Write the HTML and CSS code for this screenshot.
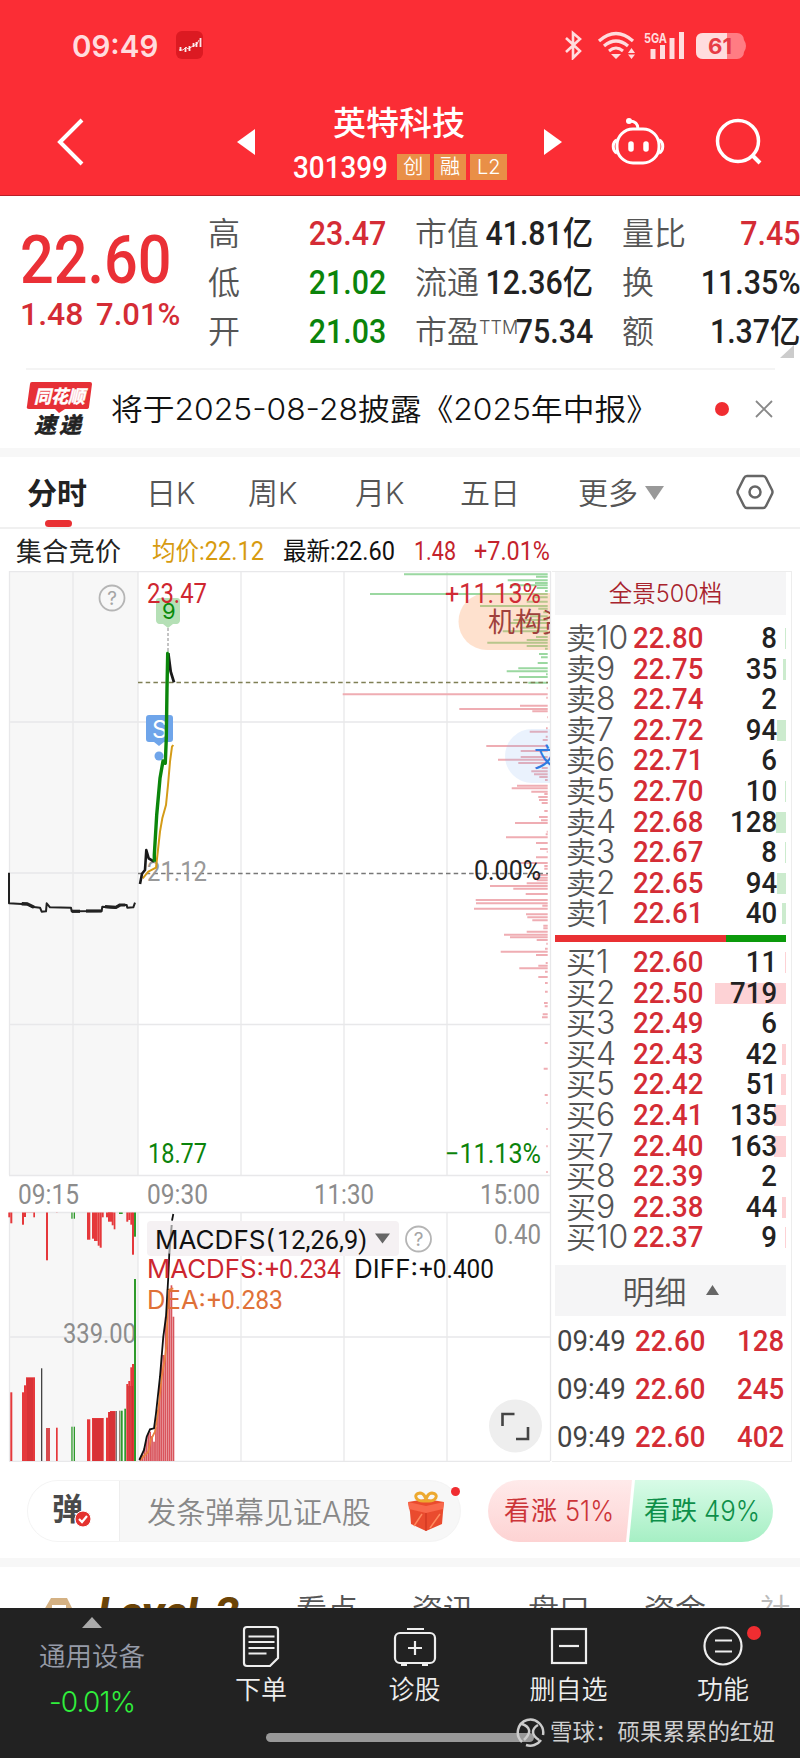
FILE: index.html
```html
<!DOCTYPE html>
<html lang="zh-CN">
<head>
<meta charset="utf-8">
<title>英特科技 301399</title>
<link rel="stylesheet" href="styles.css">
</head>
<body>
<div class="app">
  <header class="header">
    <div class="status">
      <span class="clock">09:49</span>
      <svg class="app-ico" width="27" height="28" viewBox="0 0 27 28"><rect width="27" height="28" rx="6" fill="#dc1a22"/><path d="M4.500 16v4M9.500 17v4M13.500 15v5M17.500 12v4M20.500 11v5M24.500 7v9" stroke="#fff" stroke-width="1.800" opacity=".9"/><path d="M3 19h4l3-3 2 2 5-3 4-2 2-4" fill="none" stroke="#fff" stroke-width=".8"/></svg>
      <svg class="sys" width="186" height="30" viewBox="560 30 186 30" fill="none" stroke="#ffdcde">
        <path d="M565 38l14 13-7 7V33l7 6-14 13" stroke-width="2.6"/>
        <path d="M598 41Q615 26 632 41" stroke-width="3.2"/><path d="M603 46Q615 36 627 46" stroke-width="3.2"/><path d="M608 51Q615 45 622 51" stroke-width="3"/>
        <path d="M610 54h10l-5 5zM627 53h7l-3.500-5zM627 54.500h7l-3.500 4.500z" fill="#ffdcde" stroke="none"/>
        <path d="M652 49v10M661.500 45v14M671 38v21M680.500 32v27" stroke-width="5"/>
        <text class="ui b" x="643" y="42.500" font-size="13" textLength="23" lengthAdjust="spacingAndGlyphs" fill="#ffdcde" stroke="none">5GA</text>
        <rect x="695" y="33" width="48" height="26" rx="7" fill="#ff7c83" stroke="none"/><path d="M743 40q4 6 0 12z" fill="#ff7c83" stroke="none"/>
        <path d="M702 33h24v26h-24q-7 0-7-7V40q0-7 7-7z" fill="#ffdcde" stroke="none"/>
        <text class="ui b" x="707" y="54" font-size="22" textLength="24" lengthAdjust="spacingAndGlyphs" fill="#e73b46" stroke="none">61</text>
      </svg>
    </div>
    <div class="titlebar">
      <svg class="back" width="30" height="50" viewBox="0 0 30 50"><path d="M26 3L4 25l22 22" fill="none" stroke="#fff" stroke-width="4"/></svg>
      <svg class="prev" width="18" height="26" viewBox="0 0 18 26"><path d="M18 0v26L0 13z" fill="#fff"/></svg>
      <div class="stock">
        <h1>英特科技</h1>
        <div class="code"><span class="codebox"><b class="num">301399</b></span><i>创</i><i>融</i><i class="l2">L2</i></div>
      </div>
      <svg class="next" width="18" height="26" viewBox="0 0 18 26"><path d="M0 0v26l18-13z" fill="#fff"/></svg>
      <svg class="robot" width="54" height="50" viewBox="0 0 54 50" fill="none" stroke="#fff" stroke-width="3"><rect x="6" y="12" width="42" height="34" rx="16"/><path d="M27 12c0-5-3-8-8-8"/><circle cx="18" cy="4" r="3" fill="#fff" stroke="none"/><path d="M6 23c-5 2-5 11 0 13M48 23c5 2 5 11 0 13"/><path d="M20 27v5M35 27v5" stroke-width="5.500" stroke-linecap="round"/></svg>
      <svg class="search" width="48" height="48" viewBox="0 0 48 48" fill="none" stroke="#fff" stroke-width="3.500"><circle cx="23" cy="23" r="20.500"/><path d="M37 37l8 8" stroke-width="4"/></svg>
    </div>
  </header>

  <section class="quote">
    <div class="last red">
      <div class="price"><span class="num">22.60</span></div>
      <div class="chg"><span class="num">1.48</span><span class="num">7.01%</span></div>
    </div>
    <dl class="stats c1">
      <dt>高</dt><dd class="red"><span class="num">23.47</span></dd>
      <dt>低</dt><dd class="green"><span class="num">21.02</span></dd>
      <dt>开</dt><dd class="green"><span class="num">21.03</span></dd>
    </dl>
    <dl class="stats c2">
      <dt>市值</dt><dd><span class="num">41.81亿</span></dd>
      <dt>流通</dt><dd><span class="num">12.36亿</span></dd>
      <dt>市盈<sup>TTM</sup></dt><dd><span class="num">75.34</span></dd>
    </dl>
    <dl class="stats c3">
      <dt>量比</dt><dd class="red"><span class="num">7.45</span></dd>
      <dt>换</dt><dd><span class="num">11.35%</span></dd>
      <dt>额</dt><dd><span class="num">1.37亿</span></dd>
    </dl>
    <svg class="corner" width="14" height="13"><path d="M14 0v13H0z" fill="#ccc"/></svg>
  </section>

  <section class="notice">
    <svg width="66" height="56" viewBox="27 380 66 56"><path d="M33 381h58q2 0 2 2l-3 23q0 2-3 2H66l-6 4-4-4H30q-3 0-2-3l3-22q0-2 2-2z" fill="#e62f36"/>
      <g class="cjk b" font-style="italic"><text x="35" y="402" font-size="18" textLength="51" lengthAdjust="spacingAndGlyphs" fill="#fff" stroke="#fff" stroke-width=".5">同花顺</text><text x="35" y="432" font-size="22" textLength="21" fill="#222" stroke="#222" stroke-width=".6">速</text><text x="60" y="432" font-size="22" textLength="21" fill="#222" stroke="#222" stroke-width=".6">递</text></g></svg>
    <p><span>将于2025-08-28披露《2025年中报》</span></p>
    <i class="dot"></i>
    <svg class="close" width="18" height="18"><path d="M1 1l16 16M17 1L1 17" stroke="#888" stroke-width="1.800"/></svg>
  </section>

  <nav class="tabs">
    <a class="on">分时</a><a>日K</a><a>周K</a><a>月K</a><a>五日</a><a class="more">更多<svg width="19" height="14"><path d="M0 0h19l-9.500 14z" fill="#999"/></svg></a>
    <svg class="gear" width="38" height="36" viewBox="0 0 38 36" fill="none" stroke="#666" stroke-width="2.500"><path d="M11 2h16q2 0 3 2l6 12q1 2 0 4l-6 12q-1 2-3 2H11q-2 0-3-2L2 20q-1-2 0-4L8 4q1-2 3-2z"/><circle cx="19" cy="18" r="5.500"/></svg>
  </nav>

  <svg class="info" width="800" height="42" viewBox="0 529 800 42">
    <text class="cjk" x="16" y="561" font-size="26" textLength="105" fill="#222">集合竞价</text>
    <text class="din" x="152" y="560" font-size="25" textLength="112" lengthAdjust="spacingAndGlyphs" fill="#d79b10">均价:22.12</text>
    <text class="din" x="283" y="560" font-size="25" textLength="112" lengthAdjust="spacingAndGlyphs" fill="#111">最新:22.60</text>
    <text class="din" x="414" y="560" font-size="25" textLength="42" lengthAdjust="spacingAndGlyphs" fill="#c4232c">1.48</text>
    <text class="din" x="474" y="560" font-size="25" textLength="76" lengthAdjust="spacingAndGlyphs" fill="#c4232c">+7.01%</text>
  </svg>

  <main class="board">
    <svg class="chart" width="552" height="891" viewBox="0 571 552 891">
      <rect x="9" y="571" width="129" height="604" fill="#f7f7f7"/><rect x="9" y="1212" width="129" height="250" fill="#f7f7f7"/>
      <path d="M9 571.500H550M9 722H550M9 873H138M9 1024.500H550M9 1175.500H550M9 1212.500H550M9 1337H550M9 1461.500H550M9.500 571V1175M73 571V1175M138 571V1175M241 571V1175M344 571V1175M447 571V1175M550.500 571V1461M9.500 1212V1461M73 1212V1461M138 1212V1461M241 1212V1461M344 1212V1461M447 1212V1461" stroke="#e8e8ea" stroke-width="1.300" fill="none"/>
      <g id="depth"></g>
      <path d="M550 593H487a28.500 28.500 0 0 0 0 57h63z" fill="#fb9d5c" fill-opacity=".3"/>
      <path d="M550 729H532a27 27 0 0 0 0 54h18z" fill="#8cb8f5" fill-opacity=".18"/>
      <svg x="480" y="600" width="70" height="180" viewBox="480 600 70 180"><text class="cjk" x="488" y="632" font-size="27" fill="#a0413c">机构资</text><text class="cjk" x="534" y="767" font-size="26" fill="#2f7be0">文</text></svg>
      <path d="M138 682.500H548" stroke="#7f7f55" stroke-width="1.300" stroke-dasharray="4.500 3.200"/>
      <path d="M138 873.500H548" stroke="#777" stroke-width="1.300" stroke-dasharray="4.500 3.200"/>
      <path d="M168 628V652" stroke="#888" stroke-dasharray="3 2"/>
      <path d="M159 598h18q3 0 3 3v19q0 3-3 4h-4l-5 4-5-4h-4q-3-1-3-4v-19q0-3 3-3z" fill="#b5e0b6"/>
      <text class="ui" x="162" y="619" font-size="22" fill="#0a8a0a">9</text>
      <path d="M149 715h21q3 0 3 3v21q0 3-3 3h-6l-5 4-5-4h-5q-3 0-3-3v-21q0-3 3-3z" fill="#6fa5ea"/><circle cx="159" cy="756" r="4.500" fill="#6fa5ea"/>
      <text class="ui" x="152" y="738" font-size="24" fill="#fff">S</text>
      <text class="din" x="147" y="881" font-size="27" textLength="60" lengthAdjust="spacingAndGlyphs" fill="#999">21.12</text>
      <g id="lines" fill="none" stroke-linejoin="round"></g>
      <text class="din" x="147" y="603" font-size="27" textLength="60" lengthAdjust="spacingAndGlyphs" fill="#cf2630">23.47</text>
      <text class="din" x="445" y="603" font-size="27" textLength="96" lengthAdjust="spacingAndGlyphs" fill="#d02b35">+11.13%</text>
      <text class="din" x="474" y="880" font-size="27" textLength="67" lengthAdjust="spacingAndGlyphs" fill="#222">0.00%</text>
      <text class="din" x="148" y="1163" font-size="27" textLength="59" lengthAdjust="spacingAndGlyphs" fill="#0b830b">18.77</text>
      <text class="din" x="445" y="1163" font-size="27" textLength="96" lengthAdjust="spacingAndGlyphs" fill="#0b830b">−11.13%</text>
      <g class="din" font-size="27" fill="#8c8c8c">
        <text x="18" y="1204" textLength="61" lengthAdjust="spacingAndGlyphs">09:15</text><text x="147" y="1204" textLength="61" lengthAdjust="spacingAndGlyphs">09:30</text>
        <text x="314" y="1204" textLength="60" lengthAdjust="spacingAndGlyphs">11:30</text><text x="480" y="1204" textLength="60" lengthAdjust="spacingAndGlyphs">15:00</text>
        <text x="494" y="1244" textLength="47" lengthAdjust="spacingAndGlyphs">0.40</text><text x="63" y="1343" textLength="73" lengthAdjust="spacingAndGlyphs">339.00</text>
      </g>
      <g fill="none" stroke="#b5b5b5" stroke-width="1.800"><circle cx="112" cy="598" r="12.500"/><circle cx="418.500" cy="1239" r="12.500"/></g>
      <g class="ui" font-size="19" fill="#a5a5a5" text-anchor="middle"><text x="112" y="605">?</text><text x="418.500" y="1246">?</text></g>
      <g id="auction"></g>
      <rect x="147" y="1221" width="252" height="35" rx="4" fill="#f5f1f3"/>
      <g id="macd" fill="none"></g>
      <text class="ui" x="155" y="1249" font-size="26" textLength="120" lengthAdjust="spacingAndGlyphs" fill="#111">MACDFS(</text>
      <text class="din" x="277" y="1249" font-size="26" textLength="90" lengthAdjust="spacingAndGlyphs" fill="#111">12,26,9)</text>
      <path d="M375 1233.500h15l-7.500 10z" fill="#666"/>
      <text class="ui" x="147" y="1278" font-size="25" textLength="117" lengthAdjust="spacingAndGlyphs" fill="#cc2630">MACDFS:</text><text class="din" x="265" y="1278" font-size="26" textLength="76" lengthAdjust="spacingAndGlyphs" fill="#cc2630">+0.234</text>
      <text class="ui" x="354" y="1278" font-size="25" textLength="64" lengthAdjust="spacingAndGlyphs" fill="#111">DIFF:</text><text class="din" x="419" y="1278" font-size="26" textLength="75" lengthAdjust="spacingAndGlyphs" fill="#111">+0.400</text>
      <text class="ui" x="147" y="1309" font-size="25" textLength="59" lengthAdjust="spacingAndGlyphs" fill="#df7138">DEA:</text><text class="din" x="207" y="1309" font-size="26" textLength="76" lengthAdjust="spacingAndGlyphs" fill="#df7138">+0.283</text>
      <circle cx="515.500" cy="1426" r="26.500" fill="#eee"/>
      <path d="M502.500 1426v-12h12M528 1427v12h-12" fill="none" stroke="#444" stroke-width="2.600"/>
    </svg>
    <aside class="book">
      <div class="book-head"><span>全景500档</span></div>
      <div class="rows" id="asks"></div>
      <div class="ratio"><i></i></div>
      <div class="rows bids" id="bids"></div>
      <div class="detail-head">明细<svg width="13" height="10"><path d="M6.500 0L13 10H0z" fill="#666"/></svg></div>
      <div class="ticks" id="ticks"></div>
    </aside>
  </main>

  <section class="danmu">
    <div class="input"><div class="dm"><b>弹</b><svg width="18" height="18" viewBox="0 0 18 18"><circle cx="9" cy="9" r="8" fill="#e4322f" stroke="#fff"/><path d="M5 9l3 3 5-6" fill="none" stroke="#fff" stroke-width="2.200"/></svg></div><span class="ph">发条弹幕见证A股</span>
      <svg class="gift" width="38" height="40" viewBox="407 1497 38 40"><path d="M408 1508l18-3 18 3-1 10-1 12-16 7-15-7-1-12z" fill="#ea4b2e"/><path d="M408 1508l18 4 18-4-1 7-17 4-17-4z" fill="#f9694c"/><path d="M426 1519v18" stroke="#c9301c" stroke-width="1"/><path d="M414 1532l8-12M430 1534l10-14" stroke="#ff8a5e" stroke-width="1.500"/><path d="M425 1507c-9 1-13-7-5-8 4 0 6 5 6 8 0-3 2-8 6-8 8 1 4 9-5 8z" fill="none" stroke="#eda92f" stroke-width="3"/></svg><i class="dot small"></i></div>
    <svg class="vote" width="286" height="62" viewBox="488 1480 286 62">
      <defs><linearGradient id="up" x2="0" y2="1"><stop stop-color="#ffeaea"/><stop offset="1" stop-color="#fdd3d3"/></linearGradient><linearGradient id="dn" x2="0" y2="1"><stop stop-color="#d8fbe7"/><stop offset="1" stop-color="#a6efc4"/></linearGradient></defs>
      <path d="M519 1480h113l-6 62H519a31 31 0 0 1 0-62z" fill="url(#up)"/><path d="M635 1480h107a31 31 0 0 1 0 62H629z" fill="url(#dn)"/>
      <g class="cjk" font-size="26"><text x="504" y="1520" textLength="53" fill="#cc3438">看涨</text><text x="644" y="1520" textLength="53" fill="#0d8f49">看跌</text></g>
      <g class="ui lt" font-size="28"><text x="565" y="1521" textLength="49" lengthAdjust="spacingAndGlyphs" fill="#cc3438">51%</text><text x="704" y="1521" textLength="56" lengthAdjust="spacingAndGlyphs" fill="#0d8f49">49%</text></g>
    </svg>
  </section>

  <nav class="subtabs">
    <svg class="badge" width="30" height="30"><path d="M7 0h16l6 12v18H0V12z" fill="#d4b183"/><path d="M8 7h14v5H8z" fill="#fff"/></svg>
    <em>Level-2</em><a>看点</a><a>资讯</a><a>盘口</a><a>资金</a><a class="fade">社</a>
  </nav>

  <footer class="nav">
    <div class="idx"><svg width="20" height="11"><path d="M10 0l10 11H0z" fill="#aaa"/></svg><span>通用设备</span><b>-0.01%</b></div>
    <div class="it"><svg width="44" height="44" viewBox="0 0 44 44"><path d="M8 3h28q3 0 3 3v28l-8 8H8q-3 0-3-3V6q0-3 3-3z"/><path d="M9.500 12.500h26M9.500 18h26M9.500 24h26M9.500 29.500h18"/></svg><span>下单</span></div>
    <div class="it"><svg width="44" height="44" viewBox="0 0 44 44"><rect x="2" y="9" width="40" height="30" rx="5"/><path d="M14 5h17M22 17v14M15 24h14M8 41h6M29 41h6"/></svg><span>诊股</span></div>
    <div class="it"><svg width="44" height="44" viewBox="0 0 44 44"><rect x="5" y="5" width="34" height="34"/><path d="M12 22h20"/></svg><span>删自选</span></div>
    <div class="it fn"><svg width="44" height="44" viewBox="0 0 44 44"><circle cx="22" cy="22" r="18.500"/><path d="M14 16.500h17M14 27.500h17"/></svg><span>功能</span><i class="dot"></i></div>
    <div class="home"></div>
    <div class="mark"><svg width="29" height="29" viewBox="0 0 29 29" fill="none" stroke="#ccc" stroke-width="2.500"><path d="M11 2A13 13 0 0 0 6 24M10 27A13 13 0 0 0 25 22M27 17A13 13 0 0 0 11 2M6 6q6 2 7 6t-5 10M22 7q-5 3-5 7t6 8"/></svg><span>雪球：硕果累累的红妞</span></div>
  </footer>
</div>
<script src="app.js"></script>
</body>
</html>
```
FILE: styles.css
```css
* { box-sizing: border-box; }
body { margin: 0; background: #fff; font-family: Inter, "Noto Sans CJK SC", sans-serif; color: #222; }
h1, p, dl, dd { margin: 0; }
i { font-style: normal; }
svg { display: block; flex: none; }
.app { width: 800px; height: 1758px; overflow: hidden; display: flex; flex-direction: column; }
.app > * { flex: none; }
.num, .din { font-family: Roboto, "Noto Sans CJK SC", sans-serif; font-weight: 500; }
.din { font-weight: 400; }
.num { display: inline-block; white-space: nowrap; transform: scaleX(.92); transform-origin: right center; }
.cjk { font-family: "Noto Sans CJK SC", sans-serif; }
.ui { font-family: Inter, sans-serif; }
.lt { font-weight: 300; }
.b { font-weight: 700; }
.red { color: #d42c35; }
.green { color: #0b840b; }
.dot { display: block; width: 14px; height: 14px; border-radius: 50%; background: #f02d31; }

.header { height: 196px; background: #fb2d35; border-bottom: 1px solid #b91f28; color: #fff; }
.status { height: 92px; padding: 30px 53px 0 72px; display: flex; align-items: flex-start; }
.clock { font-weight: 600; font-size: 29.5px; line-height: 32px; color: #ffdcde; width: 104px; }
.app-ico { margin-top: 1px; }
.sys { margin-left: auto; }
.titlebar { display: flex; align-items: center; height: 100px; padding: 0 37px 0 56px; }
.back { margin-right: 151px; }
.stock { width: 216px; margin-left: 36px; margin-right: 37px; }
h1 { font: 500 33px/40px "Noto Sans CJK SC", sans-serif; text-align: center; margin-top: 1px; }
.code { display: flex; align-items: center; gap: 4px; height: 34px; margin-top: 9px; }
.codebox { width: 102px; padding-left: 2px; }
.codebox .num { font-size: 32px; transform: scaleX(.87); transform-origin: left; }
.code i { width: 33px; height: 26px; background: #e98f47; font: 350 20px/26px Inter, "Noto Sans CJK SC", sans-serif; text-align: center; }
.code i.l2 { width: 37px; }
.next { margin-right: 49px; }
.robot { margin-right: 50px; }

.quote { height: 172px; position: relative; display: flex; padding: 13px 0 0 20px; }
.last { width: 188px; }
.price { font-size: 66px; line-height: 66px; margin-top: 17px; }
.last .num { transform-origin: left; }
.price .num { transform: scaleX(.9); color: #ea3036; }
.chg { display: flex; font-size: 32px; line-height: 34px; margin-top: 3px; font-weight: 400; }
.chg .num { transform: scaleX(.97); }
.chg .num:first-child { width: 76px; transform: scaleX(1); }
.stats { display: grid; grid-template-columns: auto 1fr; grid-auto-rows: 49px; font-size: 32px; line-height: 49px; }
.stats dt { color: #555; font-weight: 350; font-size: 32px; white-space: nowrap; }
.stats dd { display: flex; justify-content: flex-end; font-size: 33px; min-width: 0; }
.stats dt sup { font: 300 18px/1 Inter, sans-serif; vertical-align: 9px; margin-right: -20px; }
.c1 { width: 178px; }
.c2 { width: 178px; margin-left: 29px; }
.c3 { width: 178px; margin-left: 29px; }
.corner { position: absolute; right: 6px; bottom: 10px; }

.notice { height: 80px; margin-left: 26px; width: 749px; border-top: 2px solid #f4f4f4; display: flex; align-items: center; padding-right: 2px; }
.notice p { margin: -4px 0 0 19px; width: 605px; font-size: 30px; font-weight: 350; white-space: nowrap; color: #111; }
.notice p span { display: inline-block; transform: scaleX(1.06); transform-origin: left; }
.notice .close { margin-left: 26px; }

.tabs { height: 81px; border-top: 9px solid #f7f7f7; border-bottom: 2px solid #f0f0f0; display: grid; grid-template-columns: 119px 102px 107px 105px 118px 158px auto; padding-left: 27px; align-items: center; font-size: 30px; line-height: 70px; color: #555; font-weight: 350; }
.tabs a { padding-top: 2px; line-height: 68px; }
.tabs a.on { color: #222; font-weight: 700; position: relative; }
.tabs a.on::after { content: ""; position: absolute; left: 18px; bottom: 0; width: 27px; height: 7px; border-radius: 4px; background: #e93033; }
.tabs .more { display: flex; align-items: center; gap: 7px; }

.board { display: flex; height: 891px; }
.book { width: 240px; border: 1px solid #ededed; border-left: 0; padding: 0 5px 0 3px; }
.book-head { height: 43px; background: #f5f5f6; color: #a8232d; font-size: 23.500px; line-height: 43px; text-align: center; padding-right: 10px; margin-bottom: 8px; font-weight: 350; }
.row { height: 30.6px; line-height: 30.6px; position: relative; display: flex; padding-left: 11px; align-items: center; }
.row .lab { width: 67px; font-size: 30px; color: #555; white-space: nowrap; font-weight: 350; }
.row .lab u { font-size: 32px; text-decoration: none; }
.row .num { position: relative; font-size: 30px; }
.row .p { transform-origin: left; width: 78px; }
.row .q { margin-left: auto; margin-right: 9px; color: #222; }
.row .bar { position: absolute; right: 0; top: 5px; height: 21px; background: #ccebce; }
.bids .bar { background: #fdd2d5; }
.ratio { height: 7px; margin: 6px 0 5px; background: #0c9a0c; }
.ratio i { display: block; width: 171px; height: 7px; background: #e93033; }
.detail-head { height: 51px; margin: 12px 0 1px; background: #f5f5f6; display: flex; justify-content: center; align-items: center; gap: 19px; color: #555; font-size: 32px; font-weight: 350; }
.tick { height: 47.8px; display: flex; align-items: center; font-size: 30px; padding: 0 2px; }
.tick span:first-child { color: #444; width: 78px; transform-origin: left; font-weight: 400; }
.tick span:nth-child(2) { transform-origin: left; }
.tick span:last-child { margin-left: auto; }

.danmu { height: 96px; padding: 18px 26px 0 27px; display: flex; justify-content: space-between; }
.input { width: 434px; height: 62px; border-radius: 31px; background: #f7f7f7; position: relative; display: flex; align-items: center; border: 1px solid #f4f4f4; }
.dm { width: 92px; height: 60px; background: #fff; border-radius: 30px 0 0 30px; border-right: 1px solid #eee; position: relative; }
.dm b { position: absolute; left: 24px; top: 4px; font: 700 31px/44px "Noto Sans CJK SC", sans-serif; color: #4a4a4a; }
.dm svg { position: absolute; left: 46px; top: 29px; }
.ph { width: 229px; margin: -2px 0 0 27px; font-size: 29.2px; font-weight: 350; color: #888; white-space: nowrap; }
.gift { margin-left: 31px; }
.dot.small { position: absolute; right: 0; top: 6px; width: 9px; height: 9px; }

.subtabs { height: 50px; border-top: 9px solid #f7f7f7; position: relative; overflow: hidden; display: flex; align-items: flex-start; padding: 20px 0 0 44px; font-size: 31px; font-weight: 350; color: #555; }
.badge { margin-top: 11px; }
.subtabs em { flex: none; width: 198px; margin-left: 24px; font: italic 800 38px/44px Inter, sans-serif; color: #6b4407; margin-top: 2px; }
.subtabs a { flex: none; width: 116px; line-height: 46px; }
.subtabs .fade { color: #bbb; }

.nav { height: 150px; background: #222; position: relative; display: grid; grid-template-columns: 184px 154px 153px 155px 154px; }
.idx { display: flex; flex-direction: column; align-items: center; padding-top: 9px; color: #969ba8; font-size: 26.500px; font-weight: 350; }
.idx span { line-height: 38px; margin-top: 9px; }
.idx b { font-weight: 350; font-size: 28px; color: #30ee3c; line-height: 40px; margin-top: 7px; letter-spacing: -.8px; }
.it { display: flex; flex-direction: column; align-items: center; padding-top: 16px; color: #eee; font-size: 26px; font-weight: 350; }
.it svg { fill: none; stroke: #eee; stroke-width: 2.200; }
.it span { line-height: 38px; margin-top: 3px; }
.fn { position: relative; }
.fn .dot { position: absolute; left: 101px; top: 18px; }
.home { position: absolute; left: 266px; top: 125px; width: 268px; height: 9px; border-radius: 5px; background: #999; }
.mark { position: absolute; left: 516px; top: 109px; display: flex; align-items: center; gap: 5px; font-size: 22.500px; line-height: 30px; color: #d0d0d0; white-space: nowrap; }
```
FILE: app.js
```js
const $ = id => document.getElementById(id);

// Order book: level, price, quantity, bar width
const asks = [[10,'22.80',8,1],[9,'22.75',35,3],[8,'22.74',2,0],[7,'22.72',94,9],[6,'22.71',6,0],[5,'22.70',10,1],[4,'22.68',128,10],[3,'22.67',8,1],[2,'22.65',94,9],[1,'22.61',40,4]];
const bids = [[1,'22.60',11,1],[2,'22.50',719,71],[3,'22.49',6,0],[4,'22.43',42,4],[5,'22.42',51,5],[6,'22.41',135,12],[7,'22.40',163,12],[8,'22.39',2,0],[9,'22.38',44,4],[10,'22.37',9,1]];
const row = side => ([n, p, q, w]) => `<div class="row"><i class="bar" style="width:${w}px"></i><span class="lab">${side}<u>${n}</u></span><span class="num p red">${p}</span><span class="num q">${q}</span></div>`;
$('asks').innerHTML = asks.map(row('卖')).join('');
$('bids').innerHTML = bids.map(row('买')).join('');
$('ticks').innerHTML = [128, 245, 402].map(q => `<div class="tick"><span class="num">09:49</span><span class="num red">22.60</span><span class="num red">${q}</span></div>`).join('');

// Depth histogram, pairs of left edge and row in thirds of a pixel
const green = [372,358,768,365,683,376,765,384,690,391,770,399,795,408,270,417,760,427,740,440,600,453,775,461,790,472,750,484,700,495,690,504,720,518,668,529,795,537,768,546,740,555,622,563,740,573,795,581,777,597,783,607,773,624,715,640,680,649,798,658,717,666,745,683];
const red = [800,700,188,718,799,728,720,752,538,762,757,769,801,787,798,820,749,830,797,845,788,855,619,873,722,888,722,906,654,914,715,924,785,939,754,949,762,958,778,966,795,975,711,992,695,1000,754,1010,793,1017,775,1026,777,1035,785,1044,793,1068,777,1086,783,1096,705,1104,800,1130,797,1138,678,1147,768,1164,780,1182,800,1190,768,1207,717,1224,793,1233,793,1241,770,1260,765,1268,770,1276,740,1285,630,1293,700,1301,737,1317,587,1335,588,1345,787,1352,582,1361,738,1378,742,1387,757,1396,790,1412,790,1420,740,1430,
  672,1439,690,1447,770,1455,799,1466,795,1481,662,1490,768,1500,797,1524,775,1532,718,1540,795,1550,775,1566,795,1584,795,1610,792,1644,794,1654,788,1678,786,1687,794,1764,791,1841,794,1920,799,1944,799,2022,799,2074,799,2151];
const hist = (a, c) => { let d = ''; for (let i = 0; i < a.length; i += 2) d += `M${(280 + a[i] / 3).toFixed(1)} ${(455 + a[i + 1] / 3).toFixed(1)}H547.7`; return `<path d="${d}" stroke="${c}" stroke-width="2.1"/>`; };
$('depth').innerHTML = hist(green, '#9bd8a1') + hist(red, '#efadb3');

const pts = (a, oy) => { let d = ''; for (let i = 0; i < a.length; i += 2) d += (i ? 'L' : 'M') + (a[i] / 3).toFixed(1) + ' ' + (oy + a[i + 1] / 3).toFixed(1); return d; };
const line = (a, c, w, oy) => `<path d="${pts(a, oy)}" stroke="${c}" stroke-width="${w}"/>`;
$('lines').innerHTML =
  line([27,1253,27,1345,65,1347,80,1346,95,1355,120,1358,125,1370,138,1369,140,1345,150,1357,213,1358,215,1369,305,1368,307,1355,345,1358,360,1350,380,1350,382,1358,400,1357,405,1343], '#222', 2, 455) +
  line([65,1346,82,1347,96,1354,102,1357], '#222', 3.4, 455) + line([215,1369,240,1369], '#222', 3.2, 455) + line([258,1368,305,1368], '#222', 3.2, 455) + line([315,1355,348,1357,360,1350,376,1350], '#222', 3.2, 455) +
  line([428,1270,445,1250,468,1238,480,1130,487,1090,498,1050,504,990,510,920,516,875,520,870], '#d49b17', 2, 455) +
  line([420,1287,426,1256,435,1245,439,1185,446,1210,462,1220], '#1a1a1a', 2.6, 455) +
  line([505,595,512,650,522,682], '#1a1a1a', 2.8, 455) +
  line([463,1220,463,1200,470,1080,480,970,489,918,496,925,499,850,501,700,503,595,506,595], '#0b860b', 3.4, 455);

// Auction bars: x0, x1, tip, colour
const bars = (a, base) => a.map(([x0, x1, y, c]) => { const t = 1130 + y / 3; return `<rect x="${(x0 / 3).toFixed(1)}" y="${Math.min(t, base).toFixed(1)}" width="${((x1 - x0) / 3).toFixed(1)}" height="${Math.abs(t - base).toFixed(1)}" fill="${c || '#e5383b'}"/>`; }).join('');
const G = '#2f9a2b';
let extra = '';
for (const x of [84,90,96,282,288,294,300,306,330,336,342,385,391,397]) extra += `<path d="M${x / 3} ${x < 100 ? 1378 : x < 312 ? 1419 : x < 345 ? 1412 : 1386}V1461" stroke="#b9262c" stroke-width=".6"/>`;
$('auction').innerHTML = bars([[31,37,787],[66,72,787],[72,78,766],[78,105,742],[123,127,715,'#444'],[138,150,894,'#d84a4e'],[168,173,893],[214,218,890,G],[221,225,890,G],[261,271,868],[276,311,864],[318,324,863],[324,330,846],[330,347,843],[347,351,843,'#777'],[357,361,842,'#987'],[362,368,842,G],[373,378,836,G],[379,385,762],[385,391,753],[391,397,712],[396,403,702],[402,408,447,G]], 1461)
  + bars([[25,31,262],[31,37,280],[66,72,284],[72,78,261],[78,100,248],[100,105,262],[138,144,391],[168,173,248],[214,218,266,G],[221,225,266,G],[261,271,329],[276,282,326],[282,293,333],[293,299,347],[299,305,353],[305,311,262],[318,335,262],[324,338,275],[335,341,286],[341,346,298],[357,368,252,G],[379,385,275],[385,391,270],[391,397,284],[396,402,374],[402,408,320,G]], 1212.5) + extra;

const m = [985,975,955,930,912,905,918,935,890,840,760,675,675,560,478,480,466,560];
$('macd').innerHTML = m.map((y, i) => `<rect x="${(139.6 + i * 1.94).toFixed(1)}" y="${(1130 + y / 3).toFixed(1)}" width="1.7" height="${(331 - y / 3).toFixed(1)}" fill="#d9545c"/>`).join('')
  + line([420,990,445,965,452,930,465,905,475,840,485,740,494,690,500,640,504,480,520,475], '#e9803f', 1.8, 1130)
  + line([418,990,432,960,440,920,450,898,462,895,468,850,480,740,490,620,498,560,505,440,508,370], '#111', 1.8, 1130)
  + line([508,370,515,285], '#999', 2, 1130) + line([516,272,520,252], '#111', 1.8, 1130);
```
